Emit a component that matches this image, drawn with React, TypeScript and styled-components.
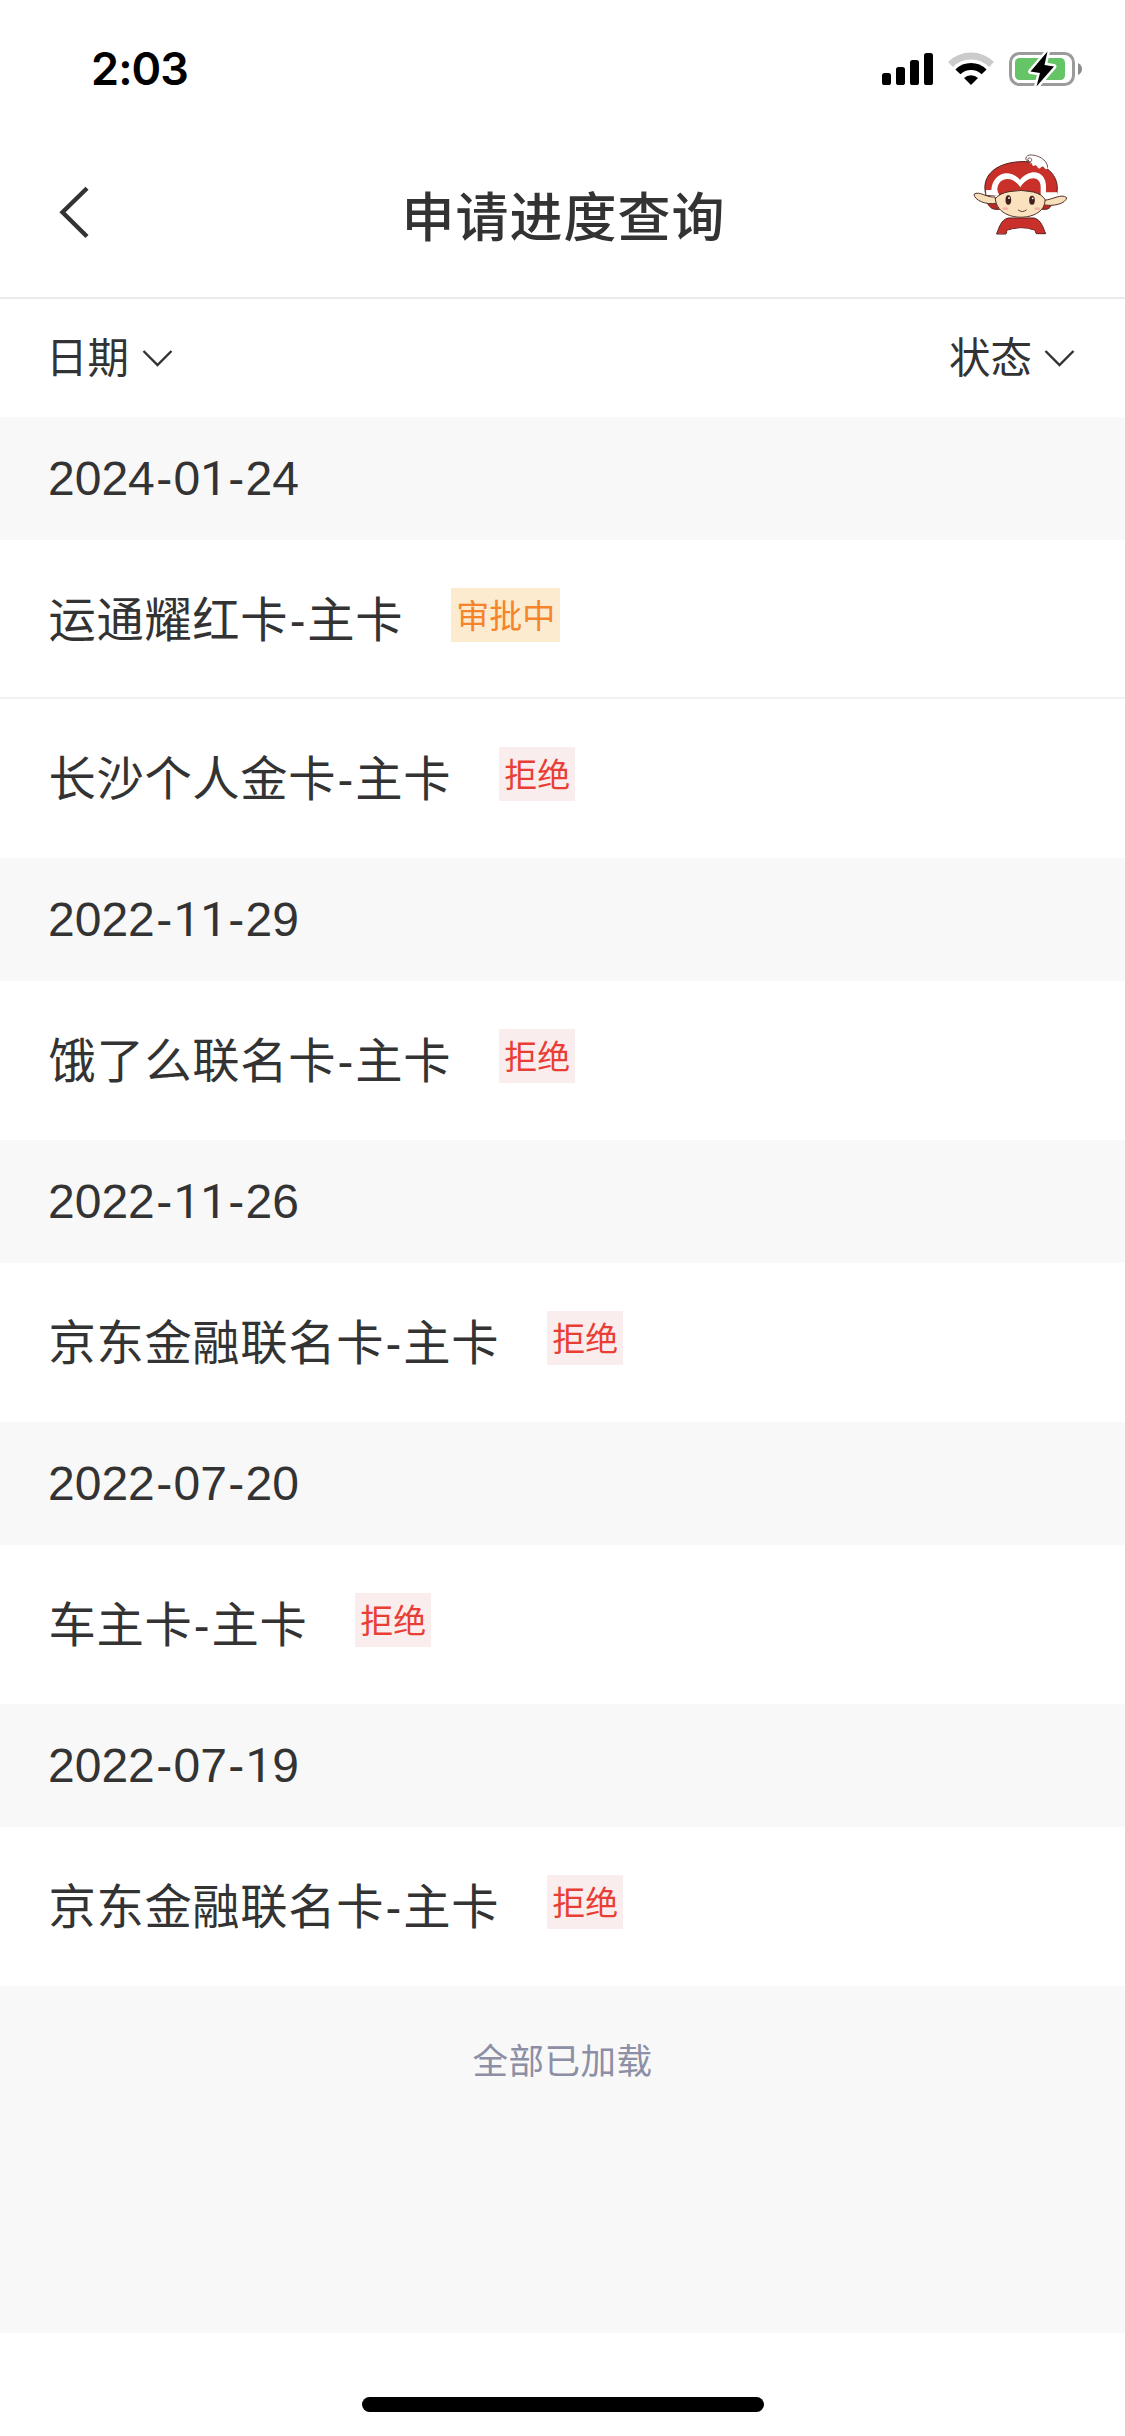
import React from 'react';
import styled, { createGlobalStyle } from 'styled-components';

const GlobalStyle = createGlobalStyle`
  * { box-sizing: border-box; }
  body { margin: 0; background: #fff; }
`;

const Screen = styled.div`
  width: 1125px;
  height: 2436px;
  display: flex;
  flex-direction: column;
  overflow: hidden;
  background: #fff;
  color: #333;
  font-family: 'Liberation Sans', 'Noto Sans CJK SC', sans-serif;
`;

const StatusBar = styled.div`
  height: 132px;
  flex: none;
  display: flex;
  justify-content: space-between;
  align-items: flex-start;
  padding: 48px 42px 0 91px;
`;

const Clock = styled.div`
  font: 600 45px/42px Inter, sans-serif;
  color: #000;
  letter-spacing: -0.9px;
`;

const StatusIcons = styled.div`
  display: flex;
  gap: 15px;
`;

const NavBar = styled.header`
  height: 167px;
  flex: none;
  display: grid;
  grid-template-columns: 165px 1fr 165px;
  border-bottom: 2px solid #ebebeb;
`;

const BackButton = styled.button`
  border: 0;
  padding: 52px 0 0 56px;
  background: none;
  display: flex;
  align-items: flex-start;
`;

const Title = styled.h1`
  margin: 0;
  padding-top: 47px;
  padding-left: 2px;
  text-align: center;
  font-size: 53px;
  letter-spacing: 1px;
  line-height: 80px;
  font-weight: 500;
`;

const Avatar = styled.div`
  padding-top: 8px;
`;

const FilterBar = styled.div`
  height: 118px;
  flex: none;
  display: flex;
  justify-content: space-between;
  align-items: center;
  padding: 0 47px 0 48px;
`;

const Filter = styled.div`
  display: flex;
  align-items: center;
  gap: 11px;
  font-size: 41.5px;
  line-height: 60px;
`;

const FilterName = styled.span<{ $wide?: boolean }>`
  padding-top: 2px;
  margin-left: ${p => (p.$wide ? '-2px' : '0')};
  margin-right: ${p => (p.$wide ? '1px' : '0')};
`;

const DateBand = styled.div`
  height: 123px;
  display: flex;
  align-items: center;
  padding: 0 48px;
  background: #f8f8f8;
  font-size: 48px;
  line-height: 60px;
`;

const Row = styled.div`
  height: 159px;
  display: flex;
  align-items: flex-start;
  gap: 48px;
  padding: 0 48px;
  &:not(:last-child) { border-bottom: 2px solid #f1f1f1; }
`;

const CardName = styled.div`
  padding-top: 46px;
  padding-left: 0.5px;
  font-size: 47.3px;
  letter-spacing: 0.65px;
  line-height: 70px;
  white-space: nowrap;
`;

const Tag = styled.div<{ $pending?: boolean }>`
  margin-top: 48px;
  height: 54px;
  padding: 1px 5px 0;
  font-size: 33px;
  line-height: 55px;
  white-space: nowrap;
  color: ${p => (p.$pending ? '#f5842a' : '#e93e35')};
  background: ${p => (p.$pending ? '#fcebcf' : '#f9eded')};
`;

const Hyphen = styled.span`
  padding-left: 1.4px;
  padding-right: 1.3px;
`;

const One = styled.span`
  font-family: Roboto, sans-serif;
  letter-spacing: -0.26px;
`;

const EndNote = styled.div`
  height: 347px;
  flex: none;
  padding-top: 49px;
  background: #f8f8f8;
  color: #8c8fa5;
  text-align: center;
  font-size: 35.5px;
  letter-spacing: 0.5px;
  line-height: 54px;
`;

const HomeArea = styled.div`
  flex: 1;
  display: flex;
  justify-content: center;
  padding-top: 64px;
`;

const HomeIndicator = styled.div`
  width: 402px;
  height: 15px;
  border-radius: 8px;
  background: #000;
`;

const Signal = () => (
  <svg width="51" height="42" viewBox="0 0 51 42">
    <rect x="0" y="25" width="9" height="12" rx="2.6" />
    <rect x="14" y="19" width="9" height="18" rx="2.6" />
    <rect x="28" y="12" width="9" height="25" rx="2.6" />
    <rect x="42" y="5" width="9" height="32" rx="2.6" />
  </svg>
);

const Wifi = () => (
  <svg width="46" height="42" viewBox="0 0 46 42" fill="none">
    <path d="M2.5 16.5A29 29 0 0 1 43.5 16.5" stroke="#cbcbcb" strokeWidth="7" />
    <path d="M9.9 23.9A18.5 18.5 0 0 1 36.1 23.9" stroke="#000" strokeWidth="7" />
    <path d="M16 30A10 10 0 0 1 30 30L23 37Z" fill="#000" />
  </svg>
);

const Battery = () => (
  <svg width="74" height="42" viewBox="0 0 74 42">
    <rect x="1.5" y="5.5" width="63" height="31" rx="9" fill="none" stroke="#9b9b9b" strokeWidth="3" />
    <path d="M69 15Q73 17 73 21T69 27Z" fill="#8c8c8c" />
    <rect x="6" y="10" width="50" height="22" rx="4.5" fill="#65c466" />
    <path d="M38.5 3.5L21.5 23.5L31 25L27.5 38.5L45 18.5L35.5 17Z" fill="#000" stroke="#fff" strokeWidth="5" strokeLinejoin="round" />
    <path d="M38.5 3.5L21.5 23.5L31 25L27.5 38.5L45 18.5L35.5 17Z" fill="#000" />
  </svg>
);

const BackIcon = () => (
  <svg width="34" height="56" viewBox="0 0 34 56" fill="none" stroke="#333" strokeWidth="4.4">
    <path d="M31 4.2L6.5 28.2L31 52.5" />
  </svg>
);

const Chevron = () => (
  <svg width="35" height="20" viewBox="0 0 35 20" fill="none" stroke="#333" strokeWidth="2.4">
    <path d="M2.5 3L16.5 17L30.5 3" />
  </svg>
);

const Mascot = () => (
  <svg width="120" height="110" viewBox="0 0 360 330" strokeLinejoin="round" strokeLinecap="round">
    <path d="M79 184C88 202 96 208 108 208H256C268 208 278 196 280 182Z" fill="#b92a24" stroke="#55221f" strokeWidth="3" />
    <path d="M110 281C117 265 122 239 145 234H222C245 240 249 264 257 281L229 281L224 271Q182 257 142 271L138 281Z" fill="#c9302a" stroke="#55221f" strokeWidth="3" />
    <path d="M142 272Q182 258 224 272V281H142Z" fill="#fff" />
    <path d="M78 166C62 112 101 70 178 65C250 60 308 105 288 170Q240 166 220 156Q184 148 147 156Q115 168 78 166Z" fill="#c9302a" stroke="#55221f" strokeWidth="3" />
    <path d="M78 150H94C96 106 142 80 180 119C216 80 258 96 258 139V157H291V172H242V143C243 107 204 105 181 142C158 105 115 111 112 147Q112 158 119 167L79 165Z" fill="#fff" />
    <path d="M104 171C80 174 57 151 42 163C43 180 77 196 109 190Z" fill="#f7dfbb" stroke="#553029" strokeWidth="3" />
    <path d="M253 181C281 178 304 160 320 173C318 191 278 201 250 194Z" fill="#f7dfbb" stroke="#553029" strokeWidth="3" />
    <path d="M106 176Q120 159 147 155Q184 147 220 156Q248 164 255 179C257 248 110 252 106 176Z" fill="#f9e2bd" stroke="#553029" strokeWidth="3" />
    <ellipse cx="145" cy="180" rx="8.5" ry="14.5" fill="#43201d" />
    <ellipse cx="216" cy="181" rx="8.5" ry="13.5" fill="#43201d" />
    <circle cx="147" cy="174" r="2.8" fill="#fff" />
    <circle cx="218" cy="175" r="2.8" fill="#fff" />
    <ellipse cx="136" cy="206" rx="9" ry="4" fill="#f6b3a5" />
    <ellipse cx="232" cy="206" rx="9" ry="4" fill="#f6b3a5" />
    <path d="M175 210Q187 220 199 210" fill="none" stroke="#69372e" strokeWidth="3" />
    <path d="M207 70C217 67 218 53 207 54C202 45 218 41 232 48C251 52 265 67 263 85Q259 92 253 83Q248 76 243 82Q237 90 232 80Q226 73 221 78Q216 80 216 70Z" fill="#fff" />
    <path d="M204 68C216 70 220 54 208 54C202 54 202 62 207 63C193 63 195 48 208 45C230 43 263 58 263 82" fill="none" stroke="#55302c" strokeWidth="2.5" />
  </svg>
);

/* Widens hyphens and sets the numeral 1 without a foot. */
const Label = ({ text }: { text: string }) => (
  <span>
    {text.split(/(-|1+)/).filter(Boolean).map((part, i) =>
      part === '-' ? <Hyphen key={i}>-</Hyphen> : part[0] === '1' ? <One key={i}>{part}</One> : part
    )}
  </span>
);

const groups = [
  { date: '2024-01-24', cards: [{ name: '运通耀红卡-主卡', status: '审批中' }, { name: '长沙个人金卡-主卡', status: '拒绝' }] },
  { date: '2022-11-29', cards: [{ name: '饿了么联名卡-主卡', status: '拒绝' }] },
  { date: '2022-11-26', cards: [{ name: '京东金融联名卡-主卡', status: '拒绝' }] },
  { date: '2022-07-20', cards: [{ name: '车主卡-主卡', status: '拒绝' }] },
  { date: '2022-07-19', cards: [{ name: '京东金融联名卡-主卡', status: '拒绝' }] },
];

export default function App() {
  return (
    <Screen>
      <GlobalStyle />
      <StatusBar>
        <Clock>2:03</Clock>
        <StatusIcons>
          <Signal />
          <Wifi />
          <Battery />
        </StatusIcons>
      </StatusBar>
      <NavBar>
        <BackButton aria-label="返回"><BackIcon /></BackButton>
        <Title>申请进度查询</Title>
        <Avatar><Mascot /></Avatar>
      </NavBar>
      <FilterBar>
        <Filter><FilterName $wide>日期</FilterName><Chevron /></Filter>
        <Filter><FilterName>状态</FilterName><Chevron /></Filter>
      </FilterBar>
      {groups.map(group => (
        <section key={group.date}>
          <DateBand><Label text={group.date} /></DateBand>
          {group.cards.map(card => (
            <Row key={card.name}>
              <CardName><Label text={card.name} /></CardName>
              <Tag $pending={card.status === '审批中'}>{card.status}</Tag>
            </Row>
          ))}
        </section>
      ))}
      <EndNote>全部已加载</EndNote>
      <HomeArea><HomeIndicator /></HomeArea>
    </Screen>
  );
}
